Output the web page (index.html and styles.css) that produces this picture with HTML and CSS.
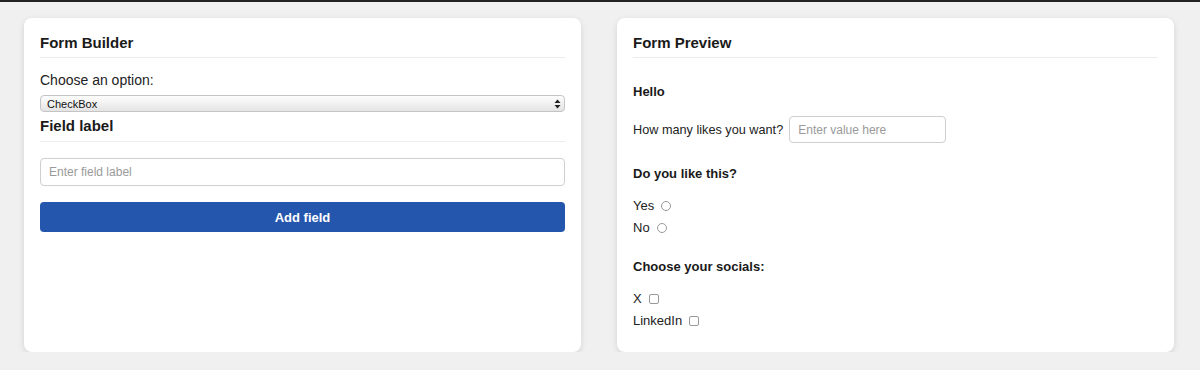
FILE: index.html
```html
<!DOCTYPE html>
<html lang="en">
<head>
  <meta charset="UTF-8">
  <meta name="viewport" content="width=device-width, initial-scale=1.0">
  <title>Form Builder</title>
  <link rel="stylesheet" href="styles.css">
</head>
<body>
  <div class="app">
    <div class="card">
      <h2 class="card-title">Form Builder</h2>

      <label class="option-label" for="fieldType">Choose an option:</label>
      <div class="select-wrap">
        <select id="fieldType" class="type-select">
          <option>TextBox</option>
          <option>Radio</option>
          <option selected>CheckBox</option>
        </select>
        <svg class="select-arrows" width="7" height="10" viewBox="0 0 7 10">
          <path d="M3.5 0.5 L6.5 4 L0.5 4 Z" fill="#222"/>
          <path d="M3.5 9.5 L6.5 6 L0.5 6 Z" fill="#222"/>
        </svg>
      </div>

      <h2 class="card-title sub">Field label</h2>
      <input type="text" class="text-input label-input" placeholder="Enter field label">
      <button class="add-btn">Add field</button>
    </div>

    <div class="card">
      <h2 class="card-title">Form Preview</h2>

      <div class="preview">
        <div class="group first">
          <h4 class="group-title">Hello</h4>
          <div class="row">
            <span>How many likes you want?</span>
            <input type="text" class="text-input value-input" placeholder="Enter value here">
          </div>
        </div>

        <div class="group">
          <h4 class="group-title">Do you like this?</h4>
          <div class="options">
            <label class="opt">Yes <input type="radio" name="like" class="radio"></label>
            <label class="opt">No <input type="radio" name="like" class="radio"></label>
          </div>
        </div>

        <div class="group">
          <h4 class="group-title">Choose your socials:</h4>
          <div class="options">
            <label class="opt">X <input type="checkbox" class="check"></label>
            <label class="opt">LinkedIn <input type="checkbox" class="check"></label>
          </div>
        </div>
      </div>
    </div>
  </div>
</body>
</html>
```

FILE: styles.css
```css
body {
  margin: 0;
  font-family: "Liberation Sans", Arial, Helvetica, sans-serif;
  background-color: #f0f0f0;
  color: #1a1a1a;
  border-top: 2px solid #222;
}
.app {
  display: grid;
  grid-template-columns: 1fr 1fr;
  gap: 36px;
  padding: 16px 26px 0 24px;
}
.card {
  background: #fff;
  border-radius: 8px;
  box-shadow: 0 2px 6px rgba(0, 0, 0, 0.12);
  padding: 16px;
  height: 334px;
  box-sizing: border-box;
}
.card-title {
  margin: 0;
  font-size: 15px;
  line-height: 18px;
  font-weight: bold;
  padding-bottom: 5px;
  border-bottom: 1px solid #ececec;
}
.card-title.sub {
  margin-top: 5px;
  padding-bottom: 6px;
}
.option-label {
  display: block;
  font-size: 14px;
  line-height: 17px;
  margin: 14px 0 6px;
  color: #222;
}
.select-wrap {
  position: relative;
}
.type-select {
  -webkit-appearance: none;
  appearance: none;
  width: 100%;
  height: 17px;
  box-sizing: border-box;
  border: 1px solid #c4c4c4;
  border-radius: 4px;
  background: linear-gradient(#fdfdfd, #e4e4e4);
  font-family: "Liberation Sans", Arial, sans-serif;
  font-size: 11px;
  padding: 0 6px;
  color: #111;
  display: block;
}
.select-arrows {
  position: absolute;
  right: 4px;
  top: 4px;
  pointer-events: none;
}
.text-input {
  box-sizing: border-box;
  border: 1px solid #cfcfcf;
  border-radius: 4px;
  font-family: "Liberation Sans", Arial, sans-serif;
  font-size: 12px;
  padding: 0 8px;
  outline: none;
}
.text-input::placeholder {
  color: #9a9a9a;
}
.label-input {
  display: block;
  width: 100%;
  height: 28px;
  margin-top: 16px;
}
.add-btn {
  display: block;
  width: 100%;
  height: 30px;
  margin-top: 16px;
  border: none;
  border-radius: 4px;
  background: #2456ae;
  color: #fff;
  font-family: "Liberation Sans", Arial, sans-serif;
  font-size: 13px;
  font-weight: bold;
  cursor: pointer;
}
.preview {
  padding-top: 26px;
}
.group {
  margin-top: 23px;
}
.group.first {
  margin-top: 0;
}
.group-title {
  margin: 0 0 15px;
  font-size: 13px;
  line-height: 16px;
  font-weight: bold;
}
.group.first .group-title {
  margin-bottom: 16px;
}
.row {
  display: flex;
  align-items: center;
  gap: 6px;
  font-size: 12.7px;
  color: #222;
}
.value-input {
  width: 157px;
  height: 27px;
}
.options {
  display: flex;
  flex-direction: column;
  gap: 5px;
}
.opt {
  display: flex;
  align-items: center;
  font-size: 13px;
  line-height: 17px;
  color: #222;
}
.radio, .check {
  -webkit-appearance: none;
  appearance: none;
  width: 10px;
  height: 10px;
  margin: 0 0 0 7px;
  border: 1px solid #999;
  background: #fff;
  box-sizing: border-box;
}
.radio {
  border-radius: 50%;
}
.check {
  border-radius: 2px;
}
```
